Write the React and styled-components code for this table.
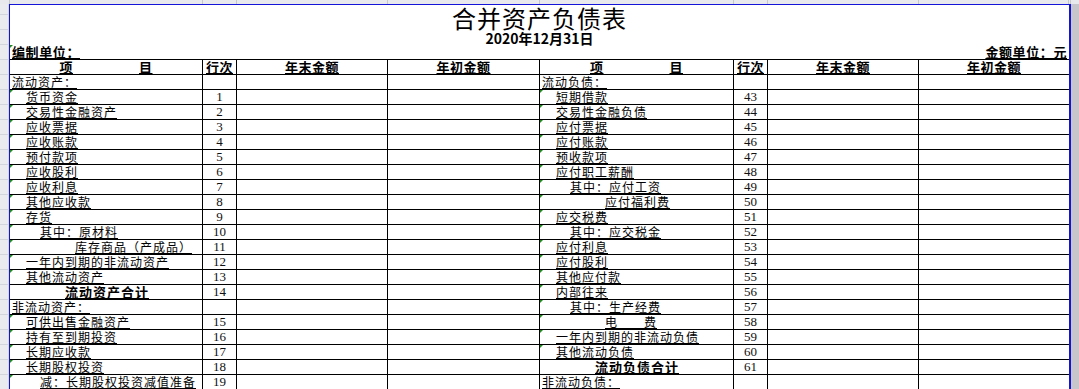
import React from "react";
import styled, { createGlobalStyle, css } from "styled-components";

const GlobalStyle = createGlobalStyle`
  *, *::before, *::after { box-sizing: border-box; }
  html, body { margin: 0; padding: 0; background: #fff; overflow: hidden; }
  body { font-family: "Noto Sans CJK SC", "Noto Sans", sans-serif; color: #000; }
`;

const COLS = "193px 34px 151px 152px 194px 34px 151px 150px";

const Screen = styled.div`
  width: 1079px;
  height: 389px;
  display: flex;
  flex-direction: column;
  overflow: hidden;
  background: #fff;
`;

const TopBar = styled.div`
  height: 4px;
  flex: none;
  display: grid;
  grid-template-columns: 10px ${COLS} 2px 1fr;
  background: #e7e9ec;
`;

const TopSeg = styled.div`
  border-right: 1px solid #c4c8ce;
`;

const Main = styled.div`
  flex: 1;
  display: flex;
  min-height: 0;
`;

const Gutter = styled.div`
  width: 9px;
  flex: none;
  background-color: #e9ebee;
  background-image: repeating-linear-gradient(
    to bottom,
    transparent 0 14px,
    #d2d6dc 14px 15px
  );
  background-position: 0 -4px;
  border-right: 1px solid #d6d9de;
`;

const RightGutter = styled.div`
  flex: 1;
  background: #c7c7cb;
`;

const Page = styled.div`
  width: 1062px;
  flex: none;
  border-top: 1px solid #1414d8;
  border-left: 1px solid #1414d8;
  border-right: 2px solid #1414d8;
  display: flex;
  flex-direction: column;
  background: #fff;
`;

const Title = styled.h1`
  margin: 0;
  height: 26px;
  font-size: 24px;
  line-height: 26px;
  font-weight: 400;
  letter-spacing: 1px;
  text-align: center;
`;

const DateLine = styled.div`
  height: 14px;
  font-size: 14px;
  line-height: 14px;
  font-weight: 700;
  text-align: center;
`;

const UnitRow = styled.div`
  height: 14px;
  display: flex;
  justify-content: space-between;
  align-items: flex-end;
  font-size: 13px;
  line-height: 14px;
  font-weight: 700;
  letter-spacing: 0.6px;
`;

const marker = css`
  &::before {
    content: "";
    position: absolute;
    top: 0;
    left: 0;
    border-top: 3px solid #1d8d1d;
    border-right: 3px solid transparent;
  }
`;

const UnitText = styled.span`
  position: relative;
  padding: 0 ${(p) => (p.$right ? "2px" : "2px")};
  text-decoration: underline;
  text-decoration-thickness: 1px;
  text-underline-offset: 1px;
  ${(p) => p.$mark && marker}
`;

const Table = styled.div`
  border-top: 1px solid #000;
`;

const Row = styled.div`
  display: grid;
  grid-template-columns: ${COLS};
  height: 15px;
  border-bottom: 1px solid #000;
`;

const Cell = styled.div`
  position: relative;
  height: 14px;
  border-right: 1px solid #000;
  white-space: nowrap;
  &:last-child { border-right: none; }
`;

const HeadCell = styled(Cell)`
  display: flex;
  justify-content: center;
  gap: ${(p) => p.$gap || 0}px;
  font-size: 13px;
  line-height: 14px;
  font-weight: 700;
  letter-spacing: 0.5px;
  & > span {
    text-decoration: underline;
    text-decoration-thickness: 1px;
    text-underline-offset: 1px;
  }
`;

const indents = { section: 2, 1: 16, 2: 30, 3: 65, total: 55 };

const LabelCell = styled(Cell)`
  padding-left: ${(p) => indents[p.$level]}px;
  font-size: ${(p) => (p.$level === "total" ? 13 : 12)}px;
  font-weight: ${(p) => (p.$level === "total" ? 700 : 400)};
  letter-spacing: 1px;
  line-height: 14px;
  & > span {
    text-decoration: underline;
    text-decoration-thickness: 1px;
    text-underline-offset: 1px;
  }
  ${(p) => p.$mark && marker}
`;

const NumCell = styled(Cell)`
  font-family: "Liberation Serif", "Times New Roman", serif;
  font-size: 13px;
  line-height: 14px;
  text-align: center;
  color: #111;
`;

const AmountCell = styled(Cell)``;

const left = [
  ["流动资产：", "section"],
  ["货币资金", 1, 1],
  ["交易性金融资产", 1, 2],
  ["应收票据", 1, 3],
  ["应收账款", 1, 4],
  ["预付款项", 1, 5],
  ["应收股利", 1, 6],
  ["应收利息", 1, 7],
  ["其他应收款", 1, 8],
  ["存货", 1, 9],
  ["其中：原材料", 2, 10],
  ["库存商品（产成品）", 3, 11],
  ["一年内到期的非流动资产", 1, 12],
  ["其他流动资产", 1, 13],
  ["流动资产合计", "total", 14],
  ["非流动资产：", "section"],
  ["可供出售金融资产", 1, 15],
  ["持有至到期投资", 1, 16],
  ["长期应收款", 1, 17],
  ["长期股权投资", 1, 18],
  ["减：长期股权投资减值准备", 2, 19],
];

const right = [
  ["流动负债：", "section"],
  ["短期借款", 1, 43],
  ["交易性金融负债", 1, 44],
  ["应付票据", 1, 45],
  ["应付账款", 1, 46],
  ["预收款项", 1, 47],
  ["应付职工薪酬", 1, 48],
  ["其中：应付工资", 2, 49],
  ["应付福利费", 3, 50],
  ["应交税费", 1, 51],
  ["其中：应交税金", 2, 52],
  ["应付利息", 1, 53],
  ["应付股利", 1, 54],
  ["其他应付款", 1, 55],
  ["内部往来", 1, 56],
  ["其中：生产经费", 2, 57],
  ["电　　费", 3, 58],
  ["一年内到期的非流动负债", 1, 59],
  ["其他流动负债", 1, 60],
  ["流动负债合计", "total", 61],
  ["非流动负债：", "section"],
];

function Half({ item }) {
  const [label, level, num] = item;
  const mark = level !== "section" && level !== "total";
  return (
    <>
      <LabelCell $level={level} $mark={mark}>
        <span>{label}</span>
      </LabelCell>
      <NumCell>{num ?? ""}</NumCell>
      <AmountCell />
      <AmountCell />
    </>
  );
}

function HeaderHalf() {
  return (
    <>
      <HeadCell $gap={66}>
        <span>项</span>
        <span>目</span>
      </HeadCell>
      <HeadCell>
        <span>行次</span>
      </HeadCell>
      <HeadCell>
        <span>年末金额</span>
      </HeadCell>
      <HeadCell>
        <span>年初金额</span>
      </HeadCell>
    </>
  );
}

export default function App() {
  return (
    <Screen>
      <GlobalStyle />
      <TopBar>
        {Array.from({ length: 10 }).map((_, i) => (
          <TopSeg key={i} />
        ))}
      </TopBar>
      <Main>
        <Gutter />
        <Page>
          <Title>合并资产负债表</Title>
          <DateLine>2020年12月31日</DateLine>
          <UnitRow>
            <UnitText $mark>编制单位：</UnitText>
            <UnitText $right>金额单位：元</UnitText>
          </UnitRow>
          <Table>
            <Row>
              <HeaderHalf />
              <HeaderHalf />
            </Row>
            {left.map((item, i) => (
              <Row key={i}>
                <Half item={item} />
                <Half item={right[i]} />
              </Row>
            ))}
          </Table>
        </Page>
        <RightGutter />
      </Main>
    </Screen>
  );
}
